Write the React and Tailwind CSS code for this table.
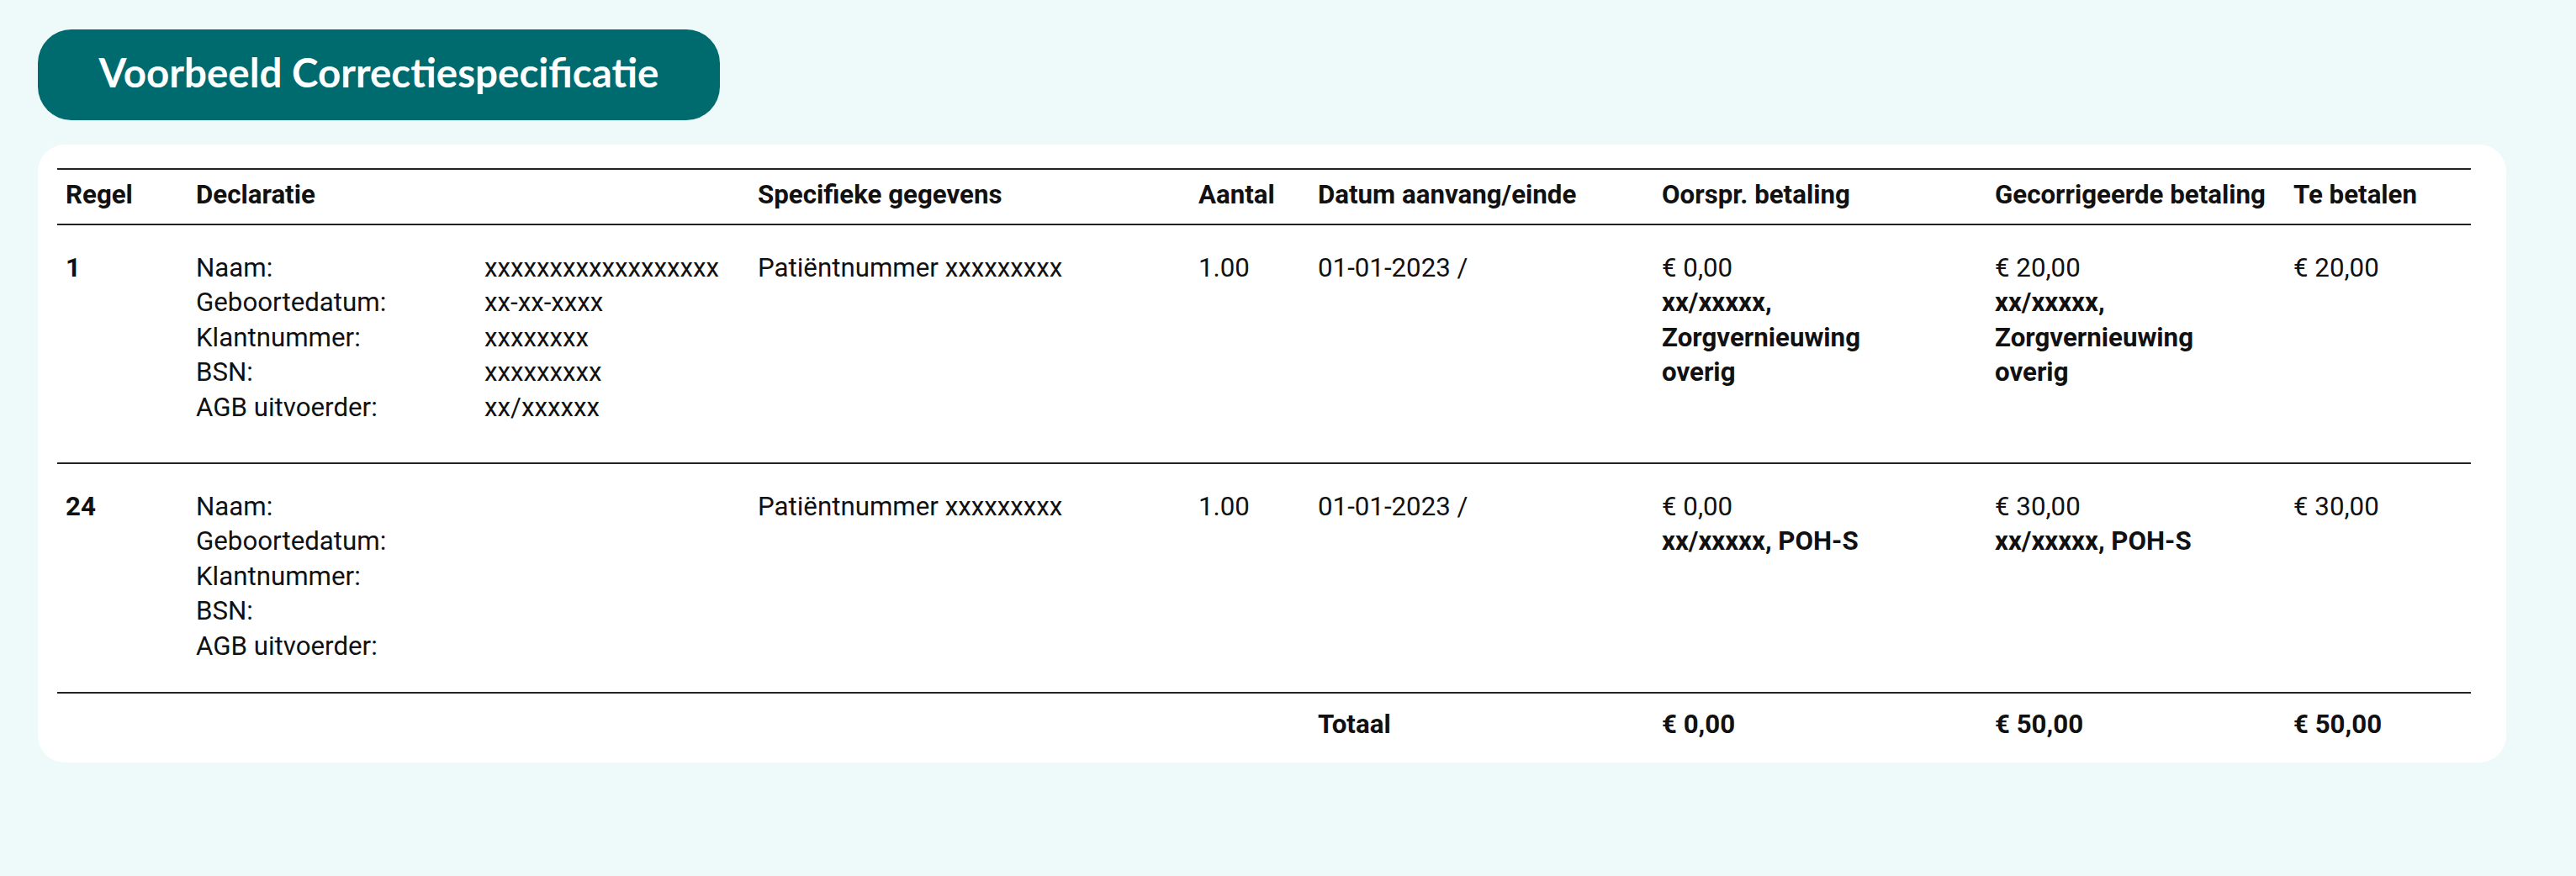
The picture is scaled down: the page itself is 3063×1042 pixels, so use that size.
const cols = 'grid grid-cols-[155px_343px_325px_524px_142px_409px_396px_355px_1fr] px-[10px]';

const rows = [
  {
    nr: '1',
    values: ['xxxxxxxxxxxxxxxxxx', 'xx-xx-xxxx', 'xxxxxxxx', 'xxxxxxxxx', 'xx/xxxxxx'],
    spec: 'Patiëntnummer xxxxxxxxx',
    aantal: '1.00',
    datum: '01-01-2023 /',
    oorspr: '€ 0,00',
    gecorr: '€ 20,00',
    code: 'xx/xxxxx, Zorgvernieuwing overig',
    teBetalen: '€ 20,00',
    pad: 'pt-[30px] pb-[44px]',
  },
  {
    nr: '24',
    values: [],
    spec: 'Patiëntnummer xxxxxxxxx',
    aantal: '1.00',
    datum: '01-01-2023 /',
    oorspr: '€ 0,00',
    gecorr: '€ 30,00',
    code: 'xx/xxxxx, POH-S',
    teBetalen: '€ 30,00',
    pad: 'pt-[30px] pb-[33px]',
  },
];

const labels = ['Naam:', 'Geboortedatum:', 'Klantnummer:', 'BSN:', 'AGB uitvoerder:'];

function Payment({ amount, code }) {
  return (
    <div>
      <div>{amount}</div>
      <div className="max-w-[330px] font-bold">{code}</div>
    </div>
  );
}

export default function App() {
  return (
    <div className="min-h-screen bg-[#eef9f9] pl-[45px] pt-[35px] font-['Roboto',sans-serif] text-[31.25px] leading-[41.6px] text-[#111]">
      <div className="flex h-[108px] w-[811px] items-center justify-center rounded-[40px] bg-[#006b6f]">
        <h1 className="pb-[6px] font-['Lato',sans-serif] text-[47.5px] font-bold leading-none text-white">
          Voorbeeld Correctiespecificatie
        </h1>
      </div>

      <div className="mt-[29px] w-[2935px] rounded-[32px] bg-white pl-[23px] pt-[28px]">
        <div className="w-[2870px]">
          <div className={`${cols} border-y-2 border-[#222] pb-[13px] pt-[9px] font-bold`}>
            <div>Regel</div>
            <div className="col-span-2">Declaratie</div>
            <div>Specifieke gegevens</div>
            <div>Aantal</div>
            <div>Datum aanvang/einde</div>
            <div>Oorspr. betaling</div>
            <div>Gecorrigeerde betaling</div>
            <div>Te betalen</div>
          </div>

          {rows.map((r) => (
            <div key={r.nr} className={`${cols} border-b-2 border-[#222] ${r.pad}`}>
              <div className="font-bold">{r.nr}</div>
              <div>
                {labels.map((l) => (
                  <div key={l}>{l}</div>
                ))}
              </div>
              <div>
                {r.values.map((v, i) => (
                  <div key={i}>{v}</div>
                ))}
              </div>
              <div>{r.spec}</div>
              <div>{r.aantal}</div>
              <div>{r.datum}</div>
              <Payment amount={r.oorspr} code={r.code} />
              <Payment amount={r.gecorr} code={r.code} />
              <div>{r.teBetalen}</div>
            </div>
          ))}

          <div className={`${cols} pb-[25px] pt-[16px] font-bold`}>
            <div className="col-span-5" />
            <div>Totaal</div>
            <div>€ 0,00</div>
            <div>€ 50,00</div>
            <div>€ 50,00</div>
          </div>
        </div>
      </div>
    </div>
  );
}
